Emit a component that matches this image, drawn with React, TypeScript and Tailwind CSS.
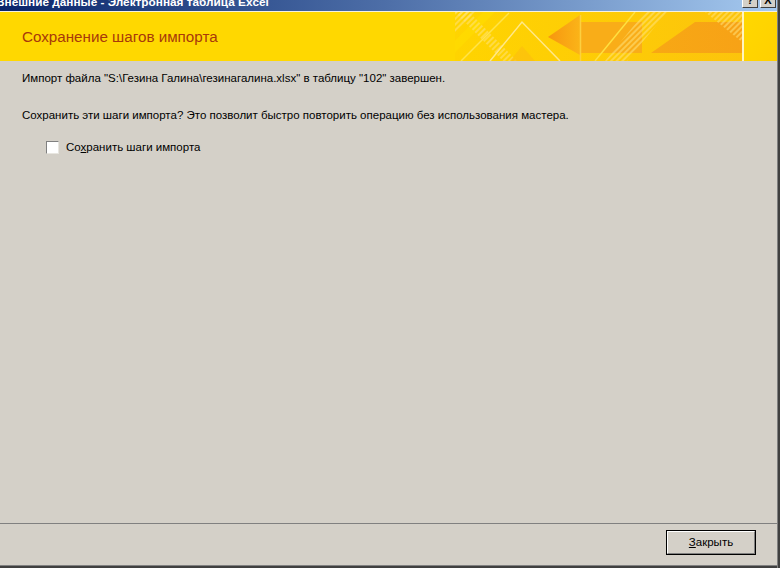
import React from "react";

function HeaderArt() {
  return (
    <svg width="287" height="49" viewBox="0 0 287 49" className="block">
      <defs>
        <linearGradient id="bg" x1="0" y1="0" x2="1" y2="0">
          <stop offset="0" stopColor="#ffd400" />
          <stop offset="1" stopColor="#fcc40c" />
        </linearGradient>
        <linearGradient id="arrow" x1="0" y1="0" x2="1" y2="0">
          <stop offset="0" stopColor="#f7960f" />
          <stop offset="1" stopColor="#fbb418" />
        </linearGradient>
        <linearGradient id="trap" x1="0" y1="0" x2="1" y2="0">
          <stop offset="0" stopColor="#f8a814" />
          <stop offset="1" stopColor="#f7a216" />
        </linearGradient>
        <pattern id="stripes" width="4" height="4" patternUnits="userSpaceOnUse" patternTransform="rotate(45)">
          <rect width="2" height="4" fill="#ffe27a" opacity="0.55" />
        </pattern>
      </defs>
      <rect width="287" height="49" fill="url(#bg)" />
      <polygon points="0,0 22,0 0,22" fill="url(#stripes)" />
      <polygon points="-20,49 28,0 40,0 -8,49" fill="#ffe000" opacity="0.5" />
      <line x1="-66" y1="49" x2="0" y2="0" stroke="#ffe85a" strokeWidth="1.5" />
      <line x1="6" y1="49" x2="54" y2="1" stroke="#ffe34a" strokeWidth="1.5" />
      <polygon points="0,0 14,0 62,49 48,49" fill="url(#stripes)" />
      <polyline points="35,49 67,10 105,49" fill="none" stroke="#ffe88a" strokeWidth="1.5" />
      <polygon points="55,49 67,34 80,49" fill="#fbbd10" opacity="0.6" />
      <polygon points="93,25 125,3 125,43" fill="url(#arrow)" />
      <rect x="125" y="10" width="62" height="31" fill="#f9ad18" />
      <line x1="125.5" y1="3" x2="125.5" y2="49" stroke="#fcd040" strokeWidth="1.5" />
      <polygon points="150,49 190,0 212,0 172,49" fill="url(#stripes)" />
      <line x1="140" y1="49" x2="180" y2="0" stroke="#ffe040" strokeWidth="1.5" />
      <polygon points="196,41 240,10 287,10 287,41" fill="url(#trap)" />
      <polygon points="250,0 287,0 287,30" fill="url(#stripes)" />
    </svg>
  );
}

export default function App() {
  const font = { fontFamily: "Tahoma, 'Liberation Sans', 'DejaVu Sans', sans-serif" };
  return (
    <div className="w-[780px] h-[568px] flex overflow-hidden bg-[#d4d0c8]" style={font}>
      <div className="flex-1 flex flex-col min-w-0">
        {/* title bar */}
        <div className="h-[11px] relative overflow-hidden bg-gradient-to-r from-[#0a246a] via-[#4e6fa8] to-[#a6caf0] flex items-start">
          <div className="ml-[-4px] mt-[-6px] text-[11.8px] leading-[16px] font-bold text-white whitespace-nowrap">
            Внешние данные - Электронная таблица Excel
          </div>
          <div className="ml-auto flex gap-[2px] mt-[-8px] mr-[1px]">
            <div className="w-[16px] h-[16px] bg-[#d4d0c8] border border-t-white border-l-white border-r-[#404040] border-b-[#404040] flex items-end justify-center text-[11px] font-bold leading-[14px] text-black">?</div>
            <div className="w-[16px] h-[16px] bg-[#d4d0c8] border border-t-white border-l-white border-r-[#404040] border-b-[#404040] flex items-end justify-center text-[11px] font-bold leading-[14px] text-black">X</div>
          </div>
        </div>
        <div className="h-px bg-[#f4f1e0]" />
        {/* header */}
        <div className="h-[49px] flex bg-[#ffd800]">
          <div className="flex-1 flex items-center pl-[22px] pt-[1px]">
            <span className="text-[15.2px] text-[#a8390a] whitespace-nowrap">Сохранение шагов импорта</span>
          </div>
          <HeaderArt />
          <div className="w-[2px] bg-[#fff4c0]" />
          <div className="w-[33px] bg-gradient-to-br from-[#ffd800] to-[#ffd000]" />
        </div>
        {/* content */}
        <div className="flex-1 flex flex-col pl-[22px] pt-[11px] text-[11.5px] leading-[13px] text-black">
          <div className="whitespace-nowrap">Импорт файла "S:\Гезина Галина\гезинагалина.xlsx" в таблицу "102" завершен.</div>
          <div className="mt-[24px] whitespace-nowrap">Сохранить эти шаги импорта? Это позволит быстро повторить операцию без использования мастера.</div>
          <div className="mt-[19px] ml-[24px] flex items-center gap-[7px]">
            <div className="w-[13px] h-[13px] bg-white border border-t-[#808080] border-l-[#808080] border-r-[#e8e6e0] border-b-[#e8e6e0]" />
            <span className="whitespace-nowrap">Со<span className="underline">х</span>ранить шаги импорта</span>
          </div>
        </div>
        {/* separator */}
        <div className="h-px bg-[#808080]" />
        <div className="h-[41px] flex items-start justify-end pr-[21px] pt-[6px]">
          <div className="w-[90px] h-[25px] border border-black bg-[#d4d0c8]">
            <div className="w-full h-full border border-t-white border-l-white border-r-[#808080] border-b-[#808080] flex items-center justify-center text-[11.5px] text-black">
              <span><span className="underline">З</span>акрыть</span>
            </div>
          </div>
        </div>
        <div className="h-px bg-[#808080]" />
        <div className="h-[2px] bg-[#404040]" />
      </div>
      <div className="w-[3px] flex">
        <div className="w-px bg-[#808080]" />
        <div className="w-[2px] bg-[#404040]" />
      </div>
    </div>
  );
}
